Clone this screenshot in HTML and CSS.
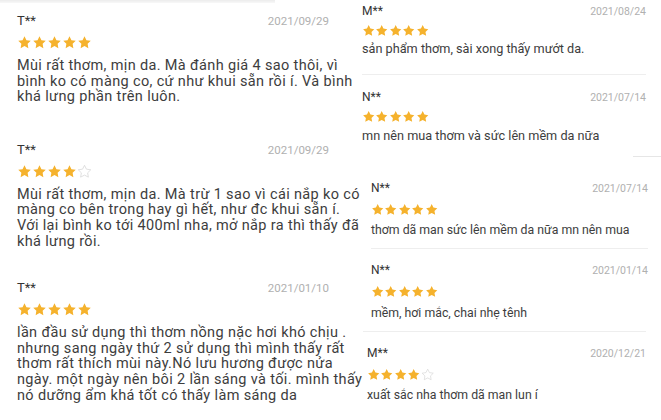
FILE: index.html
```html
<!DOCTYPE html>
<html lang="vi">

<head>
    <meta charset="UTF-8">
    <meta name="viewport" content="width=device-width, initial-scale=1.0">
    <title>Đánh giá sản phẩm</title>
    <link rel="stylesheet" href="styles.css">
</head>

<body>
    <svg class="defs" width="0" height="0">
        <symbol id="star" viewBox="0 0 24 24">
            <path d="M12 2l3.09 6.26L22 9.27l-5 4.87 1.18 6.88L12 17.77l-6.18 3.25L7 14.14 2 9.27l6.91-1.01L12 2z" />
        </symbol>
    </svg>

    <div id="board">
        <!-- cột trái -->
        <div class="col col-left">
            <div class="top-shade"></div>

            <div class="review big r1">
                <div class="review-head">
                    <span class="name">T**</span>
                    <span class="date">2021/09/29</span>
                </div>
                <div class="stars">
                    <svg class="on"><use href="#star" /></svg>
                    <svg class="on"><use href="#star" /></svg>
                    <svg class="on"><use href="#star" /></svg>
                    <svg class="on"><use href="#star" /></svg>
                    <svg class="on"><use href="#star" /></svg>
                </div>
                <p class="text">Mùi rất thơm, mịn da. Mà đánh giá 4 sao thôi, vì<br>bình ko có màng co, cứ như khui sẵn rồi í. Và bình<br>khá lưng phần trên luôn.</p>
            </div>

            <div class="review big r2">
                <div class="review-head">
                    <span class="name">T**</span>
                    <span class="date">2021/09/29</span>
                </div>
                <div class="stars">
                    <svg class="on"><use href="#star" /></svg>
                    <svg class="on"><use href="#star" /></svg>
                    <svg class="on"><use href="#star" /></svg>
                    <svg class="on"><use href="#star" /></svg>
                    <svg class="off"><use href="#star" /></svg>
                </div>
                <p class="text">Mùi rất thơm, mịn da. Mà trừ 1 sao vì cái nắp ko có<br>màng co bên trong hay gì hết, như đc khui sẵn í.<br>Với lại bình ko tới 400ml nha, mở nắp ra thì thấy đã<br>khá lưng rồi.</p>
            </div>

            <div class="review big r3">
                <div class="review-head">
                    <span class="name">T**</span>
                    <span class="date">2021/01/10</span>
                </div>
                <div class="stars">
                    <svg class="on"><use href="#star" /></svg>
                    <svg class="on"><use href="#star" /></svg>
                    <svg class="on"><use href="#star" /></svg>
                    <svg class="on"><use href="#star" /></svg>
                    <svg class="on"><use href="#star" /></svg>
                </div>
                <p class="text">lần đầu sử dụng thì thơm nồng nặc hơi khó chịu .<br>nhưng sang ngày thứ 2 sử dụng thì mình thấy rất<br>thơm rất thích mùi này.Nó lưu hương được nửa<br>ngày. một ngày nên bôi 2 lần sáng và tối. mình thấy<br>nó dưỡng ẩm khá tốt có thấy làm sáng da</p>
            </div>
        </div>

        <!-- cột phải -->
        <div class="col col-right">
            <div class="group group-a">
                <div class="review small">
                    <div class="review-head">
                        <span class="name">M**</span>
                        <span class="date">2021/08/24</span>
                    </div>
                    <div class="stars">
                        <svg class="on"><use href="#star" /></svg>
                        <svg class="on"><use href="#star" /></svg>
                        <svg class="on"><use href="#star" /></svg>
                        <svg class="on"><use href="#star" /></svg>
                        <svg class="on"><use href="#star" /></svg>
                    </div>
                    <p class="text">sản phẩm thơm, sài xong thấy mướt da.</p>
                </div>
                <div class="review small">
                    <div class="review-head">
                        <span class="name">N**</span>
                        <span class="date">2021/07/14</span>
                    </div>
                    <div class="stars">
                        <svg class="on"><use href="#star" /></svg>
                        <svg class="on"><use href="#star" /></svg>
                        <svg class="on"><use href="#star" /></svg>
                        <svg class="on"><use href="#star" /></svg>
                        <svg class="on"><use href="#star" /></svg>
                    </div>
                    <p class="text">mn nên mua thơm và sức lên mềm da nữa</p>
                </div>
                <div class="cut-line"></div>
            </div>

            <div class="group group-b">
                <div class="review small">
                    <div class="review-head">
                        <span class="name">N**</span>
                        <span class="date">2021/07/14</span>
                    </div>
                    <div class="stars">
                        <svg class="on"><use href="#star" /></svg>
                        <svg class="on"><use href="#star" /></svg>
                        <svg class="on"><use href="#star" /></svg>
                        <svg class="on"><use href="#star" /></svg>
                        <svg class="on"><use href="#star" /></svg>
                    </div>
                    <p class="text">thơm dã man sức lên mềm da nữa mn nên mua</p>
                </div>
                <div class="review small">
                    <div class="review-head">
                        <span class="name">N**</span>
                        <span class="date">2021/01/14</span>
                    </div>
                    <div class="stars">
                        <svg class="on"><use href="#star" /></svg>
                        <svg class="on"><use href="#star" /></svg>
                        <svg class="on"><use href="#star" /></svg>
                        <svg class="on"><use href="#star" /></svg>
                        <svg class="on"><use href="#star" /></svg>
                    </div>
                    <p class="text">mềm, hơi mắc, chai nhẹ tênh</p>
                </div>
                <div class="review small shifted">
                    <div class="review-head">
                        <span class="name">M**</span>
                        <span class="date">2020/12/21</span>
                    </div>
                    <div class="stars">
                        <svg class="on"><use href="#star" /></svg>
                        <svg class="on"><use href="#star" /></svg>
                        <svg class="on"><use href="#star" /></svg>
                        <svg class="on"><use href="#star" /></svg>
                        <svg class="off"><use href="#star" /></svg>
                    </div>
                    <p class="text">xuất sắc nha thơm dã man lun í</p>
                </div>
            </div>
        </div>
    </div>
</body>

</html>
```

FILE: styles.css
```css
/* chung */
html,
body {
    margin: 0;
    padding: 0;
    background: #fff;
}

body {
    font-family: Roboto, "Noto Sans", "Liberation Sans", sans-serif;
    color: #3d3d3d;
}

.defs {
    position: absolute;
}

#board {
    display: flex;
    width: 661px;
    height: 420px;
    overflow: hidden;
}

.col-left {
    width: 340px;
    padding: 0 11px 0 17px;
    box-sizing: border-box;
}

.col-right {
    flex: 1;
}

.top-shade {
    width: 275px;
    height: 3px;
    margin-left: -17px;
    background: linear-gradient(#ececec, #f8f8f8);
}

/* một đánh giá */
.review-head {
    display: flex;
    justify-content: space-between;
    align-items: baseline;
}

.name {
    color: #333;
}

.date {
    color: #b0b0b0;
}

.stars {
    display: flex;
}

.stars svg.on {
    fill: #f5b22d;
}

.stars svg.off {
    fill: none;
    stroke: #d6d6d6;
    stroke-width: 1.2;
}

.text {
    margin: 0;
}

/* cột trái - chữ lớn */
.big .review-head {
    font-size: 13px;
    line-height: 16px;
}

.big .date {
    font-size: 11.5px;
}

.big .stars {
    margin-top: 6px;
}

.big .stars svg {
    width: 15px;
    height: 15px;
}

.big .text {
    margin-top: 8px;
    font-size: 14.5px;
    letter-spacing: 0.35px;
    line-height: 15.6px;
    white-space: nowrap;
}

.r1 {
    padding-top: 10px;
}

.r2 {
    padding-top: 37px;
}

.r3 {
    padding-top: 31px;
}

/* cột phải - chữ nhỏ */
.small .review-head {
    font-size: 12px;
    line-height: 14px;
}

.small .date {
    font-size: 10.5px;
}

.small .stars svg {
    width: 13.4px;
    height: 13.4px;
}

.small .text {
    line-height: 16px;
    white-space: nowrap;
}

.group-a {
    padding: 4px 15px 0 22px;
}

.group-a .stars {
    margin-top: 5px;
}

.group-a .text {
    margin-top: 4px;
    font-size: 12.7px;
}

.group-a .review + .review {
    margin-top: 17px;
    padding-top: 15px;
    border-top: 1px solid #eeeeee;
}

.cut-line {
    width: 28px;
    margin: 12px -15px 0 auto;
    border-top: 1px solid #e6e6e6;
}

.group-b {
    padding: 24px 13px 0 31px;
}

.group-b .stars {
    margin-top: 7px;
}

.group-b .text {
    margin-top: 6px;
    font-size: 12.3px;
}

.group-b .review + .review {
    margin-top: 10px;
    padding-top: 14px;
    border-top: 1px solid #eeeeee;
}

.group-b .shifted {
    margin-left: -8px;
    padding-left: 4px;
    margin-right: 2px;
}
```
